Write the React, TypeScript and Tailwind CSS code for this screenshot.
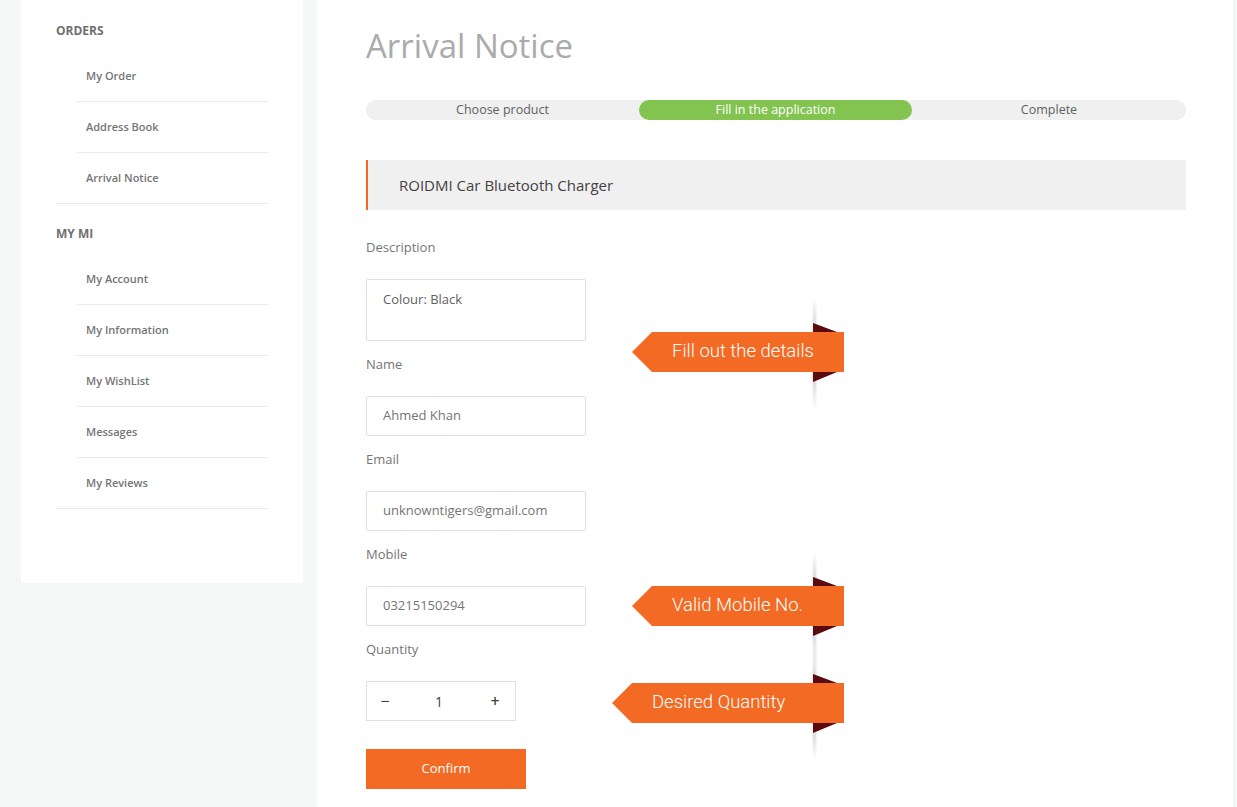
import React from "react";

const font = { fontFamily: '"Open Sans", "Liberation Sans", sans-serif' };

const NavItem: React.FC<{ label: string; last?: boolean }> = ({ label, last }) => (
  <div
    className={
      "ml-[21px] flex items-center pl-[9px] text-[11px] font-semibold text-[#757575] " +
      (last ? "h-[50px]" : "h-[51px] border-b border-[#ebebeb]")
    }
  >
    {label}
  </div>
);

const NavGroup: React.FC<{ title: string; items: string[]; first?: boolean }> = ({ title, items, first }) => (
  <div className="border-b border-[#ebebeb]">
    <div
      className={
        "h-[20px] flex items-center text-[12px] font-bold text-[#6f6f6f] mb-[10px] " +
        (first ? "mt-[21px]" : "mt-[20px]")
      }
    >
      {title}
    </div>
    {items.map((it, i) => (
      <NavItem key={it} label={it} last={i === items.length - 1} />
    ))}
  </div>
);

const Sidebar: React.FC = () => (
  <aside className="ml-[21px] w-[282px] h-[583px] bg-white px-[35px] shrink-0">
    <NavGroup title="ORDERS" items={["My Order", "Address Book", "Arrival Notice"]} first />
    <NavGroup
      title="MY MI"
      items={["My Account", "My Information", "My WishList", "Messages", "My Reviews"]}
    />
  </aside>
);

const Steps: React.FC = () => (
  <div className="mt-[32px] w-[820px] h-[20px] rounded-full bg-[#f0f0f0] flex text-[12.5px] text-[#616161]">
    <div className="w-[273px] flex items-center justify-center">Choose product</div>
    <div className="w-[273px] flex items-center justify-center rounded-full bg-[#83c350] text-white">
      Fill in the application
    </div>
    <div className="flex-1 flex items-center justify-center">Complete</div>
  </div>
);

const Label: React.FC<{ text: string; first?: boolean }> = ({ text, first }) => (
  <div
    className={
      "h-[20px] flex items-center text-[13px] text-[#757575] " + (first ? "mt-[28px]" : "mt-[14px]")
    }
  >
    {text}
  </div>
);

const Field: React.FC<{ value: string }> = ({ value }) => (
  <div className="mt-[21px] w-[220px] h-[40px] border border-[#e0e0e0] rounded-[2px] pl-[16px] flex items-center text-[13px] text-[#757575]">
    {value}
  </div>
);

type CalloutProps = {
  text: string;
  pos: string;
  width: number;
  fold: number;
};

// ribbon drawing: pointed tag wrapping round an edge, folds in dark red
const Callout: React.FC<CalloutProps> = ({ text, pos, width, fold }) => (
  <div className={"absolute h-[113px] " + pos} style={{ width }}>
    <svg width={width} height={113} className="absolute left-0 top-0">
      <defs>
        <linearGradient id={"sh" + fold} x1="0" y1="0" x2="0" y2="1">
          <stop offset="0" stopColor="#000" stopOpacity="0" />
          <stop offset="0.3" stopColor="#000" stopOpacity="0.22" />
          <stop offset="0.7" stopColor="#000" stopOpacity="0.22" />
          <stop offset="1" stopColor="#000" stopOpacity="0" />
        </linearGradient>
        <filter id={"bl" + fold} x="-2" y="0" width="5" height="1">
          <feGaussianBlur stdDeviation="1.2" />
        </filter>
      </defs>
      <rect x={fold} y={0} width={3} height={113} fill={"url(#sh" + fold + ")"} filter={"url(#bl" + fold + ")"} />
      <polygon points={`${fold},26 ${fold},35 ${fold + 24},35`} fill="#5a0b10" />
      <polygon points={`${fold},75 ${fold + 24},75 ${fold},85`} fill="#5a0b10" />
      <polygon points={`20,35 ${width},35 ${width},75 20,75 0,55`} fill="#f26a23" />
    </svg>
    <div
      className="absolute left-[40px] top-[35px] h-[40px] flex items-center text-[18.5px] font-light text-white whitespace-nowrap"
      style={{ fontFamily: '"Roboto", "Liberation Sans", sans-serif' }}
    >
      {text}
    </div>
  </div>
);

const Main: React.FC = () => (
  <main className="relative ml-[14px] w-[916px] bg-white pl-[49px] pt-[24px] shrink-0">
    <h1 className="h-[44px] flex items-center text-[33px] text-[#ababab]">Arrival Notice</h1>
    <Steps />
    <div className="mt-[40px] w-[820px] h-[50px] bg-[#f0f0f0] border-l-2 border-[#f26a23] pl-[31px] flex items-center text-[15px] text-[#424242]">
      ROIDMI Car Bluetooth Charger
    </div>

    <Label text="Description" first />
    <div className="mt-[21px] w-[220px] h-[62px] border border-[#e0e0e0] rounded-[2px] pl-[16px] pt-[10px] text-[13px] text-[#616161]">
      Colour: Black
    </div>
    <Label text="Name" />
    <Field value="Ahmed Khan" />
    <Label text="Email" />
    <Field value="unknowntigers@gmail.com" />
    <Label text="Mobile" />
    <Field value="03215150294" />
    <Label text="Quantity" />
    <div className="mt-[21px] w-[150px] h-[40px] border border-[#e0e0e0] flex items-center text-[#424242]">
      <span className="w-[36px] text-center text-[16px]">−</span>
      <span className="flex-1 text-center text-[14px]">1</span>
      <span className="w-[40px] text-center text-[16px] font-semibold">+</span>
    </div>
    <button className="mt-[28px] w-[160px] h-[40px] bg-[#f26a23] text-white text-[13px]">Confirm</button>

    <Callout text="Fill out the details" pos="left-[315px] top-[297px]" width={212} fold={181} />
    <Callout text="Valid Mobile No." pos="left-[315px] top-[551px]" width={212} fold={181} />
    <Callout text="Desired Quantity" pos="left-[295px] top-[648px]" width={232} fold={201} />
  </main>
);

export default function App() {
  return (
    <div className="min-h-screen h-[807px] flex items-start bg-[#f5f7f6] overflow-hidden" style={font}>
      <Sidebar />
      <div className="self-stretch flex">
        <Main />
      </div>
    </div>
  );
}
